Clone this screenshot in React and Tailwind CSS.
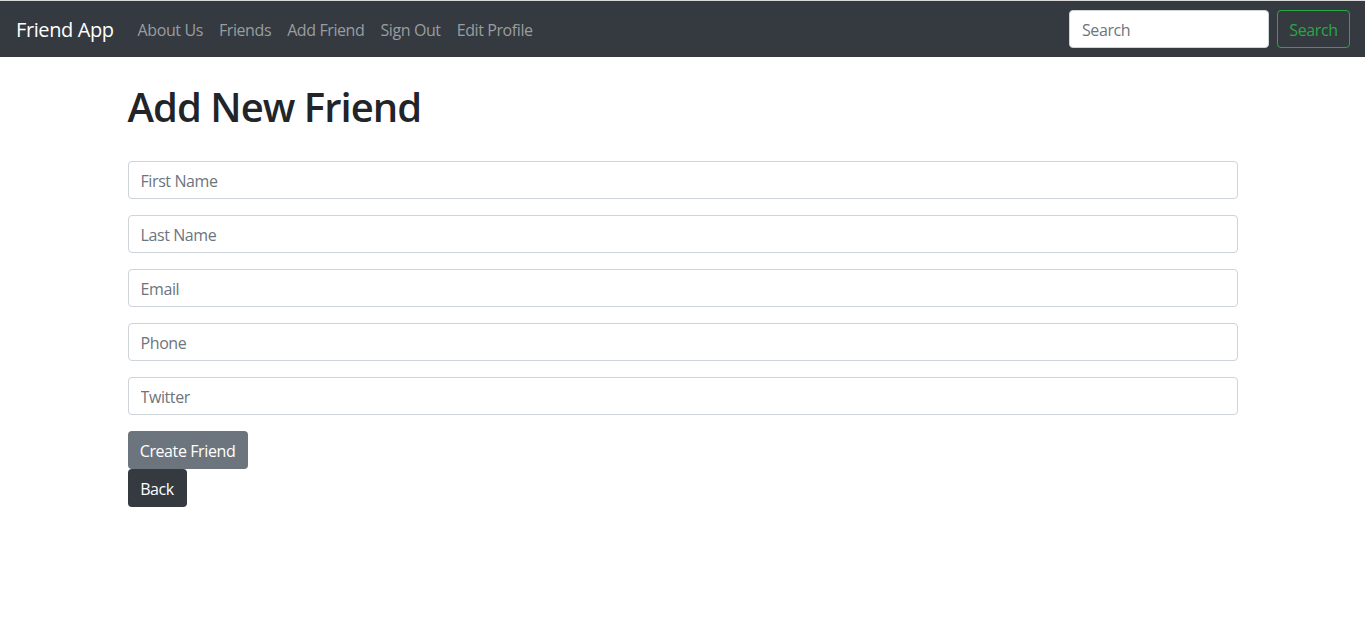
import React from "react";

const font = { fontFamily: '"Open Sans", "Noto Sans", "Liberation Sans", sans-serif' };

function Field({ placeholder }) {
  return (
    <div className="mb-4">
      <input
        type="text"
        placeholder={placeholder}
        className="block w-full h-[38px] px-3 pt-[2px] text-[16px] text-[#495057] bg-white border border-[#ced4da] rounded-[4px] placeholder:text-[#6c757d] outline-none"
      />
    </div>
  );
}

export default function App() {
  return (
    <div className="min-h-[625px] bg-white text-[#212529] tracking-[-0.025em]" style={font}>
      <div className="h-px bg-[#d9d9d9]" />
      <nav className="h-[56px] bg-[#343a40] flex items-center px-4">
        <a className="text-white text-[20px] leading-[30px] pt-[2px] mr-4">Friend App</a>
        <ul className="flex items-center text-[16px] pt-[2px] text-[#9a9da0]">
          <li className="px-2">About Us</li>
          <li className="px-2">Friends</li>
          <li className="px-2">Add Friend</li>
          <li className="px-2">Sign Out</li>
          <li className="px-2">Edit Profile</li>
        </ul>
        <div className="ml-auto flex items-center gap-2 mr-[-1px]">
          <input
            placeholder="Search"
            className="w-[200px] h-[38px] px-3 pt-[2px] text-[16px] bg-white border border-[#ced4da] rounded-[4px] placeholder:text-[#6c757d] outline-none"
          />
          <button className="h-[38px] w-[73px] pt-[2px] text-[16px] text-[#28a745] border border-[#28a745] rounded-[4px]">
            Search
          </button>
        </div>
      </nav>
      <div className="w-[1110px] mx-auto">
        <h1 className="mt-[26px] mb-[30px] text-[40px] leading-[48px] font-semibold tracking-[-0.024em]">Add New Friend</h1>
        <form>
          <Field placeholder="First Name" />
          <Field placeholder="Last Name" />
          <Field placeholder="Email" />
          <Field placeholder="Phone" />
          <Field placeholder="Twitter" />
          <button type="button" className="block h-[38px] w-[120px] pt-[2px] text-[16px] text-white bg-[#6c757d] rounded-[4px]">
            Create Friend
          </button>
          <button type="button" className="block h-[38px] w-[59px] pt-[2px] text-[16px] text-white bg-[#343a40] rounded-[4px]">
            Back
          </button>
        </form>
      </div>
    </div>
  );
}
